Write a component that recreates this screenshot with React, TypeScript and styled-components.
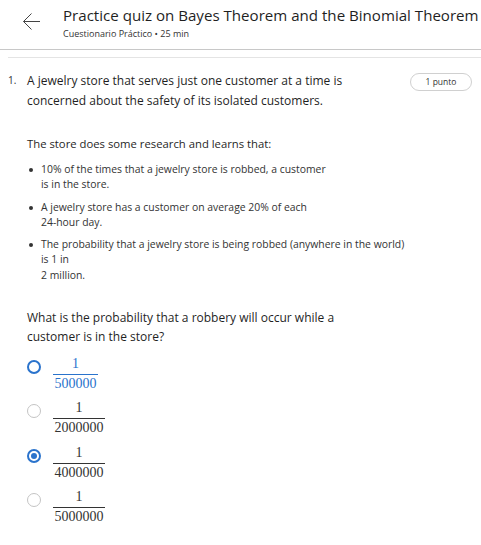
import React from "react";
import styled, { createGlobalStyle } from "styled-components";

const Global = createGlobalStyle`
  html, body { margin: 0; padding: 0; background: #fff; }
  body { font-family: "Open Sans", "DejaVu Sans", sans-serif; color: #1f1f1f; }
`;

const Page = styled.div`
  width: 481px;
  height: 545px;
  overflow: hidden;
  display: flex;
  flex-direction: column;
`;

const Header = styled.header`
  box-sizing: border-box;
  display: flex;
  align-items: flex-start;
  padding: 5px 0 0 22px;
  height: 50px;
  border-bottom: 1px solid #c8c8c8;
  white-space: nowrap;
`;

const BackButton = styled.div`
  width: 19px;
  height: 19px;
  margin-top: 7px;
  margin-right: 22px;
  display: flex;
  align-items: center;
  justify-content: center;
`;

const TitleBlock = styled.div`
  display: flex;
  flex-direction: column;
`;

const Title = styled.div`
  font-size: 15.1px;
  line-height: 20px;
  color: #1f1f1f;
`;

const Subtitle = styled.div`
  font-size: 9px;
  line-height: 12px;
  color: #333;
  margin-top: 3px;
`;

const SubRule = styled.div`
  margin: 7px 0 0 8px;
  border-top: 1px solid #e4e4e4;
`;

const Body = styled.main`
  padding: 13px 0 0 8px;
`;

const QuestionRow = styled.div`
  display: flex;
  align-items: flex-start;
`;

const Number = styled.div`
  width: 19px;
  font-size: 10px;
  line-height: 19px;
  color: #333;
`;

const QuestionText = styled.div`
  flex: 1;
  font-size: 12px;
  line-height: 19.5px;
  color: #1f1f1f;
`;

const Points = styled.div`
  margin: 2px 9px 0 0;
  width: 60px;
  height: 16px;
  border: 1px solid #d0d0d0;
  border-radius: 9px;
  font-size: 8.5px;
  line-height: 16px;
  text-align: center;
  color: #333;
`;

const Content = styled.div`
  padding-left: 19px;
`;

const Para = styled.p<{ $top: number; $size: number }>`
  margin: ${(p) => p.$top}px 0 0 0;
  font-size: ${(p) => p.$size}px;
  line-height: 19px;
  color: #1f1f1f;
`;

const List = styled.ul`
  margin: 9px 0 0 0;
  padding: 0;
  list-style: none;
  display: flex;
  flex-direction: column;
  gap: 7px;
`;

const Item = styled.li`
  position: relative;
  padding-left: 14px;
  font-size: 10.4px;
  line-height: 15.3px;
  color: #333;
  &::before {
    content: "";
    position: absolute;
    left: 2px;
    top: 6px;
    width: 4px;
    height: 4px;
    border-radius: 50%;
    background: #333;
  }
`;

const Options = styled.div`
  margin-top: 10px;
  display: flex;
  flex-direction: column;
  gap: 9.3px;
`;

const Option = styled.label`
  display: flex;
  align-items: flex-start;
`;

const Radio = styled.span<{ $state: "idle" | "focus" | "checked" }>`
  box-sizing: border-box;
  flex: none;
  width: 14px;
  height: 14px;
  margin: 4px 12px 0 0;
  border-radius: 50%;
  border: ${(p) => (p.$state === "idle" ? "1.5px solid #c4c4c4" : "2px solid #2a73cc")};
  display: flex;
  align-items: center;
  justify-content: center;
  &::after {
    content: "";
    width: 6px;
    height: 6px;
    border-radius: 50%;
    background: ${(p) => (p.$state === "checked" ? "#2a73cc" : "transparent")};
  }
`;

const Fraction = styled.span<{ $blue?: boolean }>`
  display: inline-flex;
  flex-direction: column;
  align-items: center;
  font-family: "Liberation Serif", "DejaVu Serif", "Times New Roman", serif;
  font-size: 14px;
  line-height: 15px;
  color: ${(p) => (p.$blue ? "#2a73cc" : "#333")};
`;

const Num = styled.span`
  padding: 0 2px 3px;
`;

const Den = styled.span<{ $blue?: boolean }>`
  border-top: 1px solid ${(p) => (p.$blue ? "#2a73cc" : "#333")};
  padding: 1px 1.5px 0;
`;

const options: { den: string; state: "idle" | "focus" | "checked" }[] = [
  { den: "500000", state: "focus" },
  { den: "2000000", state: "idle" },
  { den: "4000000", state: "checked" },
  { den: "5000000", state: "idle" },
];

export default function App() {
  return (
    <Page>
      <Global />
      <Header>
        <BackButton>
          <svg width="19" height="19" viewBox="0 0 19 19" fill="none">
            <path d="M18 9.5H1.5M9.5 1.5L1.5 9.5L9.5 17.5" stroke="#444" strokeWidth="1" />
          </svg>
        </BackButton>
        <TitleBlock>
          <Title>Practice quiz on Bayes Theorem and the Binomial Theorem</Title>
          <Subtitle>Cuestionario Práctico • 25 min</Subtitle>
        </TitleBlock>
      </Header>
      <SubRule />
      <Body>
        <QuestionRow>
          <Number>1.</Number>
          <QuestionText>
            A jewelry store that serves just one customer at a time is
            <br />
            concerned about the safety of its isolated customers.
          </QuestionText>
          <Points>1 punto</Points>
        </QuestionRow>
        <Content>
          <Para $top={24} $size={11.3}>The store does some research and learns that:</Para>
          <List>
            <Item>
              10% of the times that a jewelry store is robbed, a customer
              <br />
              is in the store.
            </Item>
            <Item>
              A jewelry store has a customer on average 20% of each
              <br />
              24-hour day.
            </Item>
            <Item>
              The probability that a jewelry store is being robbed (anywhere in the world)
              <br />
              is 1 in
              <br />
              2 million.
            </Item>
          </List>
          <Para $top={25} $size={12}>
            What is the probability that a robbery will occur while a
            <br />
            customer is in the store?
          </Para>
          <Options>
            {options.map((o) => {
              const blue = o.state === "focus";
              return (
                <Option key={o.den}>
                  <Radio $state={o.state} />
                  <Fraction $blue={blue}>
                    <Num>1</Num>
                    <Den $blue={blue}>{o.den}</Den>
                  </Fraction>
                </Option>
              );
            })}
          </Options>
        </Content>
      </Body>
    </Page>
  );
}
